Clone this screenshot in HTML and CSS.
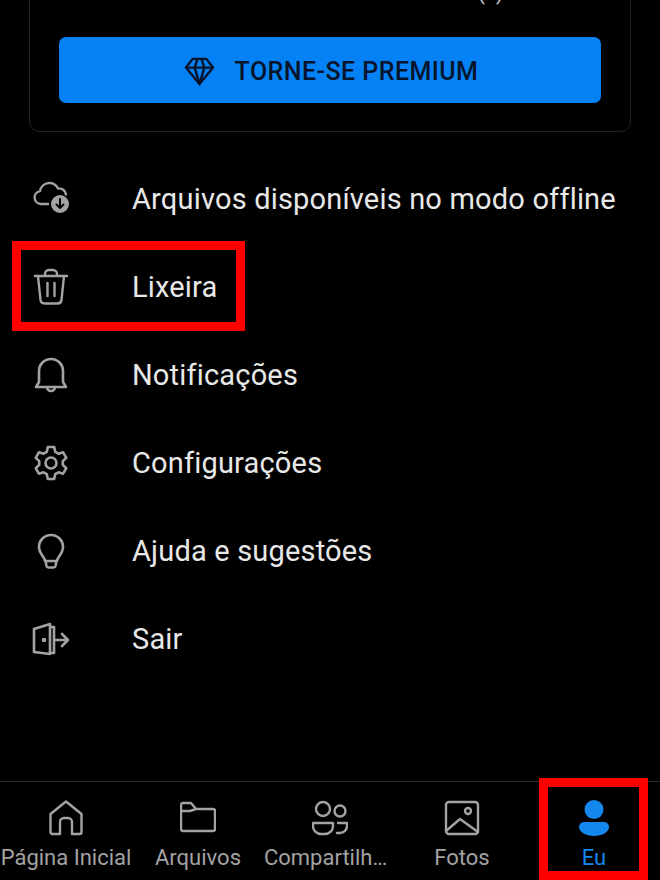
FILE: index.html
```html
<!DOCTYPE html>
<html lang="pt-BR">
<head>
<meta charset="utf-8">
<title>Eu</title>
<link rel="stylesheet" href="styles.css">
</head>
<body>
<div class="screen">
  <main class="content">
    <section class="card">
      <p class="card-note">(1)</p>
      <button class="premium">
        <svg class="premium-icon" viewBox="0 0 32 32" fill="none" stroke="#07142c" stroke-width="2.500" stroke-linejoin="round"><path d="M9 4h14l7 9-14 17L2 13z"/><path d="M2 13h28M11 13l5 17 5-17M11 13l3-9M21 13l-3-9"/></svg>
        <span class="premium-label">TORNE-SE PREMIUM</span>
      </button>
    </section>
    <nav class="menu">
      <a class="row">
        <svg class="row-icon" viewBox="0 0 40 40" fill="none" stroke="#a3a3a3" stroke-width="2.400" stroke-linecap="round" stroke-linejoin="round"><path d="M17 25H10a6.500 6.500 0 0 1-1-12.900A9.500 9.500 0 0 1 27 9.500a7 7 0 0 1 8 6"/><circle cx="29" cy="25" r="9" fill="#a3a3a3" stroke="none"/><path d="M29 20v9M25.500 25.500 29 29l3.500-3.500" stroke="#000" stroke-width="2"/></svg>
        <span>Arquivos disponíveis no modo offline</span>
      </a>
      <a class="row">
        <svg class="row-icon" viewBox="0 0 40 40" fill="none" stroke="#a3a3a3" stroke-width="2.400" stroke-linecap="round" stroke-linejoin="round"><path d="M4 9h32M14 9V7a4 4 0 0 1 4-4h4a4 4 0 0 1 4 4v2M7 9l2.500 24a4 4 0 0 0 4 3.500h13a4 4 0 0 0 4-3.500L33 9M16.500 16v13M23.500 16v13"/></svg>
        <span>Lixeira</span>
      </a>
      <a class="row">
        <svg class="row-icon" viewBox="0 0 40 40" fill="none" stroke="#a3a3a3" stroke-width="2.600" stroke-linecap="round" stroke-linejoin="round"><path d="M8 27V16a12 12 0 0 1 24 0v11l3 5H5zM16 32a4 4 0 0 0 8 0"/></svg>
        <span>Notificações</span>
      </a>
      <a class="row">
        <svg class="row-icon" viewBox="0 0 40 40" fill="none" stroke="#a3a3a3" stroke-width="2.600" stroke-linecap="round" stroke-linejoin="round"><circle cx="20" cy="20" r="5.500"/><path d="M16.800 4h6.400l1 4.800 3.300 1.900 4.600-1.400 3.200 5.500-3.500 3.300v3.800l3.500 3.300-3.200 5.500-4.600-1.400-3.300 1.900-1 4.800h-6.400l-1-4.800-3.300-1.900-4.600 1.400-3.200-5.500 3.500-3.300v-3.800l-3.500-3.300 3.200-5.500 4.600 1.400 3.300-1.900z"/></svg>
        <span>Configurações</span>
      </a>
      <a class="row">
        <svg class="row-icon" viewBox="0 0 40 40" fill="none" stroke="#a3a3a3" stroke-width="2.600" stroke-linecap="round" stroke-linejoin="round"><path d="M14 30c0-4-6-7-6-14a12 12 0 0 1 24 0c0 7-6 10-6 14zM14.500 30l1 5a2 2 0 0 0 2 1.500h5a2 2 0 0 0 2-1.500l1-5"/></svg>
        <span>Ajuda e sugestões</span>
      </a>
      <a class="row">
        <svg class="row-icon" viewBox="0 0 40 40" fill="none" stroke="#a3a3a3" stroke-width="2.600" stroke-linecap="round" stroke-linejoin="round"><path d="M3 10l16-5v30l-16-2zM19 8h4v26h-4M23 21h14M31 15l6 6-6 6"/><circle cx="13" cy="21" r="1" fill="#a3a3a3"/></svg>
        <span>Sair</span>
      </a>
    </nav>
  </main>
  <footer class="tabs">
    <a class="tab">
      <svg class="tab-icon" viewBox="0 0 36 36" fill="none" stroke="#a3a3a3" stroke-width="2.400" stroke-linecap="round" stroke-linejoin="round"><path d="M2.500 14 18 1.500 33.500 14v18a2 2 0 0 1-2 2H24V22a4 4 0 0 0-4-4h-4a4 4 0 0 0-4 4v12H4.500a2 2 0 0 1-2-2z"/></svg>
      <span>Página Inicial</span>
    </a>
    <a class="tab">
      <svg class="tab-icon" viewBox="0 0 36 36" fill="none" stroke="#a3a3a3" stroke-width="2.400" stroke-linecap="round" stroke-linejoin="round"><path d="M1 5a2 2 0 0 1 2-2h8l5 6h17a2 2 0 0 1 2 2v18a2 2 0 0 1-2 2H3a2 2 0 0 1-2-2zM1 11h9l6-2"/></svg>
      <span>Arquivos</span>
    </a>
    <a class="tab">
      <svg class="tab-icon" viewBox="0 0 36 36" fill="none" stroke="#a3a3a3" stroke-width="2.400" stroke-linecap="round" stroke-linejoin="round"><circle cx="11" cy="9" r="7"/><circle cx="28" cy="11" r="5.500"/><path d="M1 23h20v3a8 8 0 0 1-8 8H9a8 8 0 0 1-8-8zM26 23h9v3a7 7 0 0 1-7 7h-3"/></svg>
      <span class="tab-clipped">Compartilh…</span>
    </a>
    <a class="tab">
      <svg class="tab-icon" viewBox="0 0 36 36" fill="none" stroke="#a3a3a3" stroke-width="2.400" stroke-linecap="round" stroke-linejoin="round"><rect x="2" y="2" width="32" height="32" rx="3"/><circle cx="24" cy="11" r="3"/><path d="M2 31 16 19l18 13"/></svg>
      <span>Fotos</span>
    </a>
    <a class="tab tab-active">
      <svg class="tab-icon" viewBox="0 0 36 36" fill="#1488ee"><circle cx="18" cy="9.500" r="9.500"/><path d="M8 22h20a5 5 0 0 1 5 5c0 5-7 9-15 9S3 32 3 27a5 5 0 0 1 5-5z"/></svg>
      <span>Eu</span>
    </a>
  </footer>
  <div class="mark mark-trash"></div>
  <div class="mark mark-me"></div>
</div>
</body>
</html>
```

FILE: styles.css
```css
* { box-sizing: border-box; }
html, body { margin: 0; padding: 0; background: #000; }
.screen {
  position: relative;
  width: 660px;
  height: 880px;
  overflow: hidden;
  display: flex;
  flex-direction: column;
  background: #000;
  font-family: Roboto, "Liberation Sans", sans-serif;
}
.content { flex: 1; }
.card {
  height: 200px;
  margin: -68px 29px 0;
  padding: 0 29px 28px;
  border: 1px solid #222;
  border-radius: 10px;
  display: flex;
  flex-direction: column;
  justify-content: flex-end;
}
.card-note {
  margin: 0 0 42px;
  height: 4px;
  color: #ccc;
  font-size: 20px;
  line-height: 4px;
  text-align: right;
  padding-right: 98px;
}
.premium {
  height: 66px;
  width: 100%;
  border: 0;
  padding: 0 0 0 2px;
  border-radius: 7px;
  background: #0482f5;
  color: #07142c;
  font: 500 25px Roboto, "Liberation Sans", sans-serif;
  letter-spacing: 0.45px;
  display: flex;
  align-items: center;
  justify-content: center;
  gap: 20px;
}
.premium-label { padding-top: 2px; }
.premium-icon { width: 31px; height: 31px; }
.menu { margin-top: 23px; }
.row {
  height: 88px;
  display: flex;
  align-items: center;
  padding-left: 31px;
  gap: 61px;
  color: #e8e8e8;
  font-size: 29px;
  letter-spacing: 0.18px;
}
.row-icon { width: 40px; height: 40px; flex: none; }
.tabs {
  height: 99px;
  border-top: 1px solid #2a2a2a;
  display: grid;
  grid-template-columns: repeat(5, 132px);
  padding-top: 18px;
}
.tab {
  display: flex;
  flex-direction: column;
  align-items: center;
  gap: 9px;
  color: #a3a3a3;
  font-size: 22px;
  white-space: nowrap;
}
.tab-clipped { margin-right: 9px; }
.tab-icon { width: 36px; height: 36px; }
.tab-active { color: #1488ee; }
.mark { position: absolute; border: 9px solid #f00; }
.mark-trash { left: 12px; top: 241px; width: 233px; height: 90px; }
.mark-me { left: 539px; top: 778px; width: 109px; height: 102px; }
```
